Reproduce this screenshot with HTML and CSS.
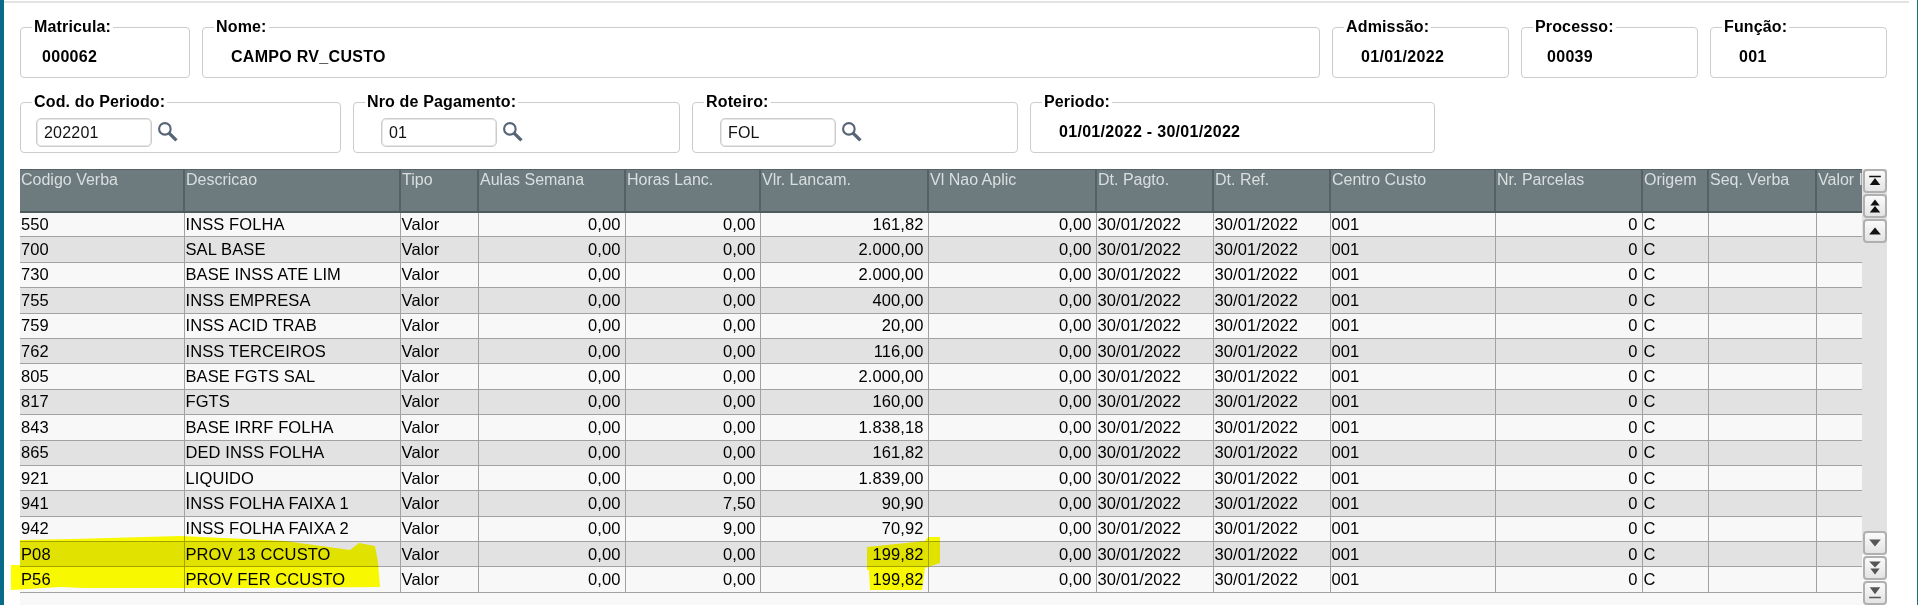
FILE: index.html
```html
<!DOCTYPE html>
<html>
<head>
    <title>Lancamentos</title>
    <link rel="stylesheet" href="styles.css">
</head>
<body>
    <div class="page">
        <div class="form-row row-top">
            <fieldset class="box w-matricula"><legend>Matricula:</legend><span class="value v-matricula">000062</span></fieldset>
            <fieldset class="box w-nome"><legend>Nome:</legend><span class="value">CAMPO RV_CUSTO</span></fieldset>
            <fieldset class="box w-small"><legend>Admissão:</legend><span class="value">01/01/2022</span></fieldset>
            <fieldset class="box w-small"><legend>Processo:</legend><span class="value v-processo">00039</span></fieldset>
            <fieldset class="box w-small"><legend>Função:</legend><span class="value">001</span></fieldset>
        </div>
        <div class="form-row row-second">
            <fieldset class="box w-cod"><legend>Cod. do Periodo:</legend>
                <div class="lookup">
                    <input type="text" value="202201">
                    <svg class="lupa" viewBox="0 0 20 20"><circle cx="7.5" cy="7.5" r="5.5"/><path d="M11.5 11.5l7 7"/></svg>
                </div>
            </fieldset>
            <fieldset class="box w-nro"><legend>Nro de Pagamento:</legend>
                <div class="lookup lookup-wide">
                    <input type="text" value="01">
                    <svg class="lupa" viewBox="0 0 20 20"><circle cx="7.5" cy="7.5" r="5.5"/><path d="M11.5 11.5l7 7"/></svg>
                </div>
            </fieldset>
            <fieldset class="box w-roteiro"><legend>Roteiro:</legend>
                <div class="lookup lookup-wide">
                    <input type="text" value="FOL">
                    <svg class="lupa" viewBox="0 0 20 20"><circle cx="7.5" cy="7.5" r="5.5"/><path d="M11.5 11.5l7 7"/></svg>
                </div>
            </fieldset>
            <fieldset class="box w-periodo"><legend>Periodo:</legend><span class="value">01/01/2022 - 30/01/2022</span></fieldset>
        </div>

        <div class="grid-area">
            <div class="grid-wrap">
                <table class="grid">
                    <colgroup>
                        <col class="c-cod"><col class="c-desc"><col class="c-tipo"><col class="c-aulas">
                        <col class="c-horas"><col class="c-vlr"><col class="c-vlr"><col class="c-dt">
                        <col class="c-dt"><col class="c-centro"><col class="c-aulas"><col class="c-origem">
                        <col class="c-seq"><col class="c-valor">
                    </colgroup>
                    <thead>
                        <tr>
                            <th>Codigo Verba</th><th>Descricao</th><th>Tipo</th><th>Aulas Semana</th><th>Horas Lanc.</th>
                            <th>Vlr. Lancam.</th><th>Vl Nao Aplic</th><th>Dt. Pagto.</th><th>Dt. Ref.</th><th>Centro Custo</th>
                            <th>Nr. Parcelas</th><th>Origem</th><th>Seq. Verba</th><th>Valor Integral</th>
                        </tr>
                    </thead>
                    <tbody id="linhas"></tbody>
                </table>
            </div>
            <div class="scroll-col">
                <div class="scroll-group">
                    <button class="scroll-btn" type="button"><svg viewBox="0 0 12 12"><path d="M1 1.5h10v1.2H1zM6 3.5l4.5 6h-9z"/></svg></button>
                    <button class="scroll-btn" type="button"><svg viewBox="0 0 12 12"><path d="M6 .5l4 5H2zM6 6l4.5 5.5h-9z"/></svg></button>
                    <button class="scroll-btn" type="button"><svg viewBox="0 0 12 12"><path d="M6 3l5 6H1z"/></svg></button>
                </div>
                <div class="scroll-group scroll-down">
                    <button class="scroll-btn" type="button"><svg viewBox="0 0 12 12"><path d="M1 3h10L6 9z"/></svg></button>
                    <button class="scroll-btn" type="button"><svg viewBox="0 0 12 12"><path d="M1 .5h10l-5 5zM2 6.5h8l-4 5z"/></svg></button>
                    <button class="scroll-btn" type="button"><svg viewBox="0 0 12 12"><path d="M1.5 1h9L6 7zM1 9.2h10v1.4H1z"/></svg></button>
                </div>
            </div>
        </div>

        <!-- marca texto por cima da grade -->
        <svg class="marker" viewBox="0 0 1918 605">
            <path d="M20 540 L73 539 L180 536 L285 541 L350 550 L359 543 L375 546 L378 562 L380 587 L260 588 L85 588 L60 587 L11 590 L11 565 L20 565 Z"/>
            <path d="M867 547 L925 541 L928 537 L940 537 L940 563 L925 568 L922 590 L870 590 L869 570 L867 570 Z"/>
        </svg>
    </div>

    <script>
        const linhas = [
            ["550", "INSS FOLHA", "0,00", "161,82"],
            ["700", "SAL BASE", "0,00", "2.000,00"],
            ["730", "BASE INSS ATE LIM", "0,00", "2.000,00"],
            ["755", "INSS EMPRESA", "0,00", "400,00"],
            ["759", "INSS ACID TRAB", "0,00", "20,00"],
            ["762", "INSS TERCEIROS", "0,00", "116,00"],
            ["805", "BASE FGTS SAL", "0,00", "2.000,00"],
            ["817", "FGTS", "0,00", "160,00"],
            ["843", "BASE IRRF FOLHA", "0,00", "1.838,18"],
            ["865", "DED INSS FOLHA", "0,00", "161,82"],
            ["921", "LIQUIDO", "0,00", "1.839,00"],
            ["941", "INSS FOLHA FAIXA 1", "7,50", "90,90"],
            ["942", "INSS FOLHA FAIXA 2", "9,00", "70,92"],
            ["P08", "PROV 13 CCUSTO", "0,00", "199,82"],
            ["P56", "PROV FER CCUSTO", "0,00", "199,82"]
        ];
        let html = "";
        for (const l of linhas) {
            html += `<tr>
                <td>${l[0]}</td><td>${l[1]}</td><td>Valor</td>
                <td class="num">0,00</td><td class="num">${l[2]}</td><td class="num">${l[3]}</td><td class="num">0,00</td>
                <td>30/01/2022</td><td>30/01/2022</td><td>001</td>
                <td class="num">0</td><td>C</td><td></td><td></td>
            </tr>`;
        }
        document.getElementById("linhas").innerHTML = html;
    </script>
</body>
</html>
```

FILE: styles.css
```css
html, body {
    margin: 0;
    height: 100%;
    overflow: hidden;
    background: #fff;
}
body {
    font-family: "Liberation Sans", Arial, sans-serif;
    font-size: 16px;
    color: #000;
}
.page {
    position: relative;
    box-sizing: border-box;
    height: 605px;
    padding: 20px 0 0 16px;
    border-left: 4px solid #0a6a8a;
    border-right: 1px solid #1f6f78;
    background: #fff;
}
/* linha cinza do topo */
.page::before {
    content: "";
    position: absolute;
    left: 0;
    right: 8px;
    top: 1px;
    height: 2px;
    background: #e4e4e4;
}
.form-row {
    display: flex;
    gap: 12px;
}
.row-second {
    margin-top: 17px;
}

.box {
    box-sizing: border-box;
    margin: 0;
    min-width: 0;
    padding: 0;
    height: 58px;
    border: 1px solid #ccc;
    border-radius: 4px;
}
.box legend {
    margin-left: 11px;
    padding: 0 2px;
    font-size: 16px;
    font-weight: bold;
    line-height: 14px;
    letter-spacing: 0.15px;
}
.w-matricula { width: 170px; }
.w-nome { width: 1118px; }
.w-small { width: 177px; }
.w-cod { width: 321px; }
.w-nro { width: 327px; }
.w-roteiro { width: 326px; }
.w-periodo { width: 405px; }

.value {
    display: block;
    padding: 14px 0 0 28px;
    font-weight: bold;
    line-height: 18px;
    letter-spacing: 0.3px;
}
.v-matricula { padding-left: 21px; }
.v-processo { padding-left: 25px; }

.lookup {
    display: flex;
    align-items: center;
    padding: 9px 0 0 15px;
}
.lookup-wide { padding-left: 27px; }
.lookup input {
    box-sizing: border-box;
    width: 116px;
    height: 29px;
    padding: 0 7px;
    border: 1px solid #ccc;
    box-shadow: inset 0 0 0 1px #e6e6e6;
    border-radius: 5px;
    font: 16px "Liberation Sans", Arial, sans-serif;
    letter-spacing: 0.2px;
    color: #111;
}
.lupa {
    width: 21px;
    height: 21px;
    margin-left: 5px;
    margin-top: -3px;
    fill: none;
    stroke: #566476;
    stroke-width: 2;
}
.lupa path { stroke-width: 3.2; }

.grid-area {
    display: flex;
    width: 1867px;
    margin-top: 16px;
    height: 436px;
    background: #f8f8f8;
}
.grid-wrap {
    width: 1842px;
    overflow: hidden;
}
.grid {
    table-layout: fixed;
    border-collapse: collapse;
    width: 1896px;
    line-height: 18px;
}
.c-cod { width: 164px; }
.c-desc { width: 216px; }
.c-tipo { width: 78px; }
.c-aulas { width: 147px; }
.c-horas { width: 135px; }
.c-vlr { width: 168px; }
.c-dt { width: 117px; }
.c-centro { width: 165px; }
.c-origem { width: 66px; }
.c-seq { width: 108px; }
.c-valor { width: 100px; }

.grid th {
    height: 42px;
    box-sizing: border-box;
    padding: 1px 1px 0 1px;
    vertical-align: top;
    text-align: left;
    font-weight: normal;
    color: #d8dfe0;
    background: #6e7b7e;
    border-left: 2px solid #566165;
    border-top: 1px solid #566165;
    border-bottom: 2px solid #4f5a5d;
    white-space: nowrap;
    overflow: hidden;
}
.grid th:first-child { border-left: 0; }
.grid td {
    height: 25.4px;
    box-sizing: border-box;
    padding: 0 2px 1px 1px;
    border: 1px solid #a2a2a2;
    border-top: 0;
    font-size: 16.5px;
    letter-spacing: 0.1px;
    color: #000;
    background: #f8f8f8;
    white-space: nowrap;
    overflow: hidden;
}
.grid td:first-child { border-left: 0; }
.grid tr:nth-child(even) td { background: #e2e2e2; }
.grid td.num {
    text-align: right;
    padding-right: 4px;
}

.scroll-col {
    width: 25px;
    display: flex;
    flex-direction: column;
    justify-content: space-between;
    background: linear-gradient(#e2e2e2 0, #e2e2e2 385px, #f8f8f8 385px);
}
.scroll-group {
    display: flex;
    flex-direction: column;
    gap: 1px;
}
.scroll-btn {
    box-sizing: border-box;
    width: 24px;
    height: 24px;
    margin-left: 1px;
    padding: 0;
    display: flex;
    align-items: center;
    justify-content: center;
    border: 2px solid #b0b0b0;
    border-radius: 4px;
    background: linear-gradient(#fafafa, #e4e4e4);
}
.scroll-btn svg {
    width: 14px;
    height: 14px;
    fill: #111;
}
.scroll-down svg { fill: #555; }

.marker {
    position: absolute;
    left: -4px;
    top: 0;
    width: 1918px;
    height: 605px;
    mix-blend-mode: multiply;
    pointer-events: none;
}
.marker path { fill: #ffff00; }
```
